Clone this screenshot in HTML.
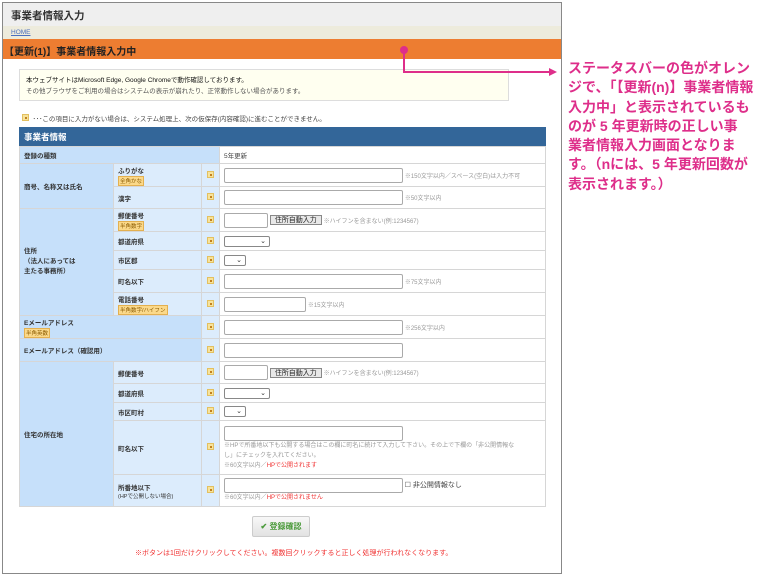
<!DOCTYPE html>
<html><head><meta charset="utf-8"><style>
*{margin:0;padding:0;box-sizing:border-box}
body{width:766px;height:578px;background:#fff;position:relative;overflow:hidden;font-family:"Liberation Sans","Noto Sans CJK JP",sans-serif;color:#333}
.a{position:absolute}
#frame{left:2px;top:2px;width:560px;height:572px;border:1px solid #888}
table{position:absolute;left:19px;top:127px;width:527px;border-collapse:collapse;font-size:6.5px}
td{border:1px solid #d6d6d6;padding:0 4px}
.h{background:#c6e0fa;font-weight:bold}
.s{background:#dcecfc;font-weight:bold}
.ic{background:#dcecfc;width:18px;padding:0;text-align:center}
.i{display:inline-block;width:7px;height:7px;background:#f7e39b;border:1px solid #e3c060;position:relative}
.i:after{content:"";position:absolute;left:2px;top:2px;width:2px;height:2px;background:#c08020}
.tag{display:inline-block;background:#fbd98a;border:1px solid #e3b050;color:#8a5a00;font-size:5.5px;padding:0 1px;font-weight:normal;margin-top:1px}
.inp{display:inline-block;border:1px solid #aaa;border-radius:2px;height:15px;vertical-align:middle;background:#fff}
.sel{display:inline-block;border:1px solid #888;border-radius:2px;height:11px;vertical-align:middle;font-size:7px;text-align:right;padding-right:3px;line-height:9px}
.n{color:#999;font-size:6px;vertical-align:middle}
.btn{display:inline-block;border:1px solid #888;background:#e8e8e8;font-size:7px;padding:0 4px;height:10px;line-height:9px;vertical-align:middle;color:#222}
.r{color:#f03030}
</style></head><body>
<div class="a" id="frame"></div>
<div class="a" style="left:3px;top:3px;width:558px;height:23px;background:#efefef;font-size:10.5px;font-weight:bold;padding:5px 8px;color:#333">事業者情報入力</div>
<div class="a" style="left:3px;top:26px;width:558px;height:13px;background:#edebdc;font-size:6.5px;padding:3px 8px;color:#4a6fc0;text-decoration:underline">HOME</div>
<div class="a" style="left:3px;top:39px;width:558px;height:20px;background:#ed7d31;font-size:10px;font-weight:bold;padding:4px 1px;color:#222">【更新(1)】事業者情報入力中</div>
<div class="a" style="left:19px;top:69px;width:490px;height:32px;background:#fffff0;border:1px solid #ddd;font-size:6.5px;padding:5px 6px;line-height:11px;color:#333"><span style="color:#111">本ウェブサイトはMicrosoft Edge, Google Chromeで動作確認しております。</span><br><span style="color:#555">その他ブラウザをご利用の場合はシステムの表示が崩れたり、正常動作しない場合があります。</span></div>
<div class="a" style="left:22px;top:113px;font-size:6.5px;color:#444"><span class="i"></span>&nbsp; ･･･この項目に入力がない場合は、システム処理上、次の仮保存(内容確認)に進むことができません。</div>
<div class="a" style="left:19px;top:127px;width:527px;height:19px;background:#336699;color:#fff;font-size:8.5px;font-weight:bold;padding:4px 5px">事業者情報</div>
<table style="top:146px">
<tr style="height:17px"><td class="h" colspan="3">登録の種類</td><td style="color:#444">5年更新</td></tr>
<tr style="height:23px"><td class="h" rowspan="2" style="width:94px">商号、名称又は氏名</td><td class="s" style="width:88px;padding-left:4px">ふりがな<br><span class="tag">全角かな</span></td><td class="ic"><span class="i"></span></td><td><span class="inp" style="width:179px"></span> <span class="n">※150文字以内／スペース(空白)は入力不可</span></td></tr>
<tr style="height:22px"><td class="s">漢字</td><td class="ic"><span class="i"></span></td><td><span class="inp" style="width:179px"></span> <span class="n">※50文字以内</span></td></tr>
<tr style="height:23px"><td class="h" rowspan="5" style="line-height:10px">住所<br>（法人にあっては<br>主たる事務所）</td><td class="s">郵便番号<br><span class="tag">半角数字</span></td><td class="ic"><span class="i"></span></td><td><span class="inp" style="width:44px"></span> <span class="btn">住所自動入力</span> <span class="n">※ハイフンを含まない(例:1234567)</span></td></tr>
<tr style="height:19px"><td class="s">都道府県</td><td class="ic"><span class="i"></span></td><td><span class="sel" style="width:46px">⌄</span></td></tr>
<tr style="height:19px"><td class="s">市区郡</td><td class="ic"><span class="i"></span></td><td><span class="sel" style="width:22px">⌄</span></td></tr>
<tr style="height:23px"><td class="s">町名以下</td><td class="ic"><span class="i"></span></td><td><span class="inp" style="width:179px"></span> <span class="n">※75文字以内</span></td></tr>
<tr style="height:23px"><td class="s">電話番号<br><span class="tag">半角数字/ハイフン</span></td><td class="ic"><span class="i"></span></td><td><span class="inp" style="width:82px"></span> <span class="n">※15文字以内</span></td></tr>
<tr style="height:23px"><td class="h" colspan="2">Eメールアドレス<br><span class="tag">半角英数</span></td><td class="ic"><span class="i"></span></td><td><span class="inp" style="width:179px"></span> <span class="n">※256文字以内</span></td></tr>
<tr style="height:23px"><td class="h" colspan="2">Eメールアドレス（確認用）</td><td class="ic"><span class="i"></span></td><td><span class="inp" style="width:179px"></span></td></tr>
<tr style="height:22px"><td class="h" rowspan="5">住宅の所在地</td><td class="s">郵便番号</td><td class="ic"><span class="i"></span></td><td><span class="inp" style="width:44px"></span> <span class="btn">住所自動入力</span> <span class="n">※ハイフンを含まない(例:1234567)</span></td></tr>
<tr style="height:19px"><td class="s">都道府県</td><td class="ic"><span class="i"></span></td><td><span class="sel" style="width:46px">⌄</span></td></tr>
<tr style="height:18px"><td class="s">市区町村</td><td class="ic"><span class="i"></span></td><td><span class="sel" style="width:22px">⌄</span></td></tr>
<tr style="height:54px"><td class="s">町名以下</td><td class="ic"><span class="i"></span></td><td style="font-size:6px;color:#999;line-height:10px;padding-top:2px"><span class="inp" style="width:179px;display:block"></span>※HPで所番地以下も公開する場合はこの欄に町名に続けて入力して下さい。その上で下欄の「非公開情報な<br>し」にチェックを入れてください。<br>※60文字以内／<span class="r">HPで公開されます</span></td></tr>
<tr style="height:32px"><td class="s">所番地以下<br><span style="font-weight:normal;font-size:5.5px">(HPで公開しない場合)</span></td><td class="ic"><span class="i"></span></td><td style="font-size:6px;color:#999;line-height:10px"><span class="inp" style="width:179px"></span> <span style="color:#444;font-size:7px">☐ 非公開情報なし</span><br>※60文字以内／<span class="r">HPで公開されません</span></td></tr>
</table>
<div class="a" style="left:252px;top:516px;width:58px;height:21px;background:linear-gradient(#f8f8f8,#e2e2e2);border:1px solid #ccc;border-radius:2px;font-size:8px;color:#4a9a3a;text-align:center;line-height:19px;font-weight:bold">✔ 登録確認</div>
<div class="a" style="left:135px;top:548px;font-size:7px;color:#f03030">※ボタンは1回だけクリックしてください。複数回クリックすると正しく処理が行われなくなります。</div>
<svg class="a" style="left:0;top:0" width="766" height="578"><circle cx="404" cy="50" r="4" fill="#de2e8a"/><polyline points="404,50 404,72 550,72" fill="none" stroke="#de2e8a" stroke-width="2"/><polygon points="549,68 557,72 549,76" fill="#de2e8a"/></svg>
<div class="a" style="left:568px;top:59px;white-space:nowrap;font-size:14px;font-weight:bold;color:#de2e8a;line-height:19.3px;letter-spacing:0">ステータスバーの色がオレン<br>ジで、「【更新(n)】事業者情報<br>入力中」と表示されているも<br>のが 5 年更新時の正しい事<br>業者情報入力画面となりま<br>す。（nには、5 年更新回数が<br>表示されます。）</div>
</body></html>
